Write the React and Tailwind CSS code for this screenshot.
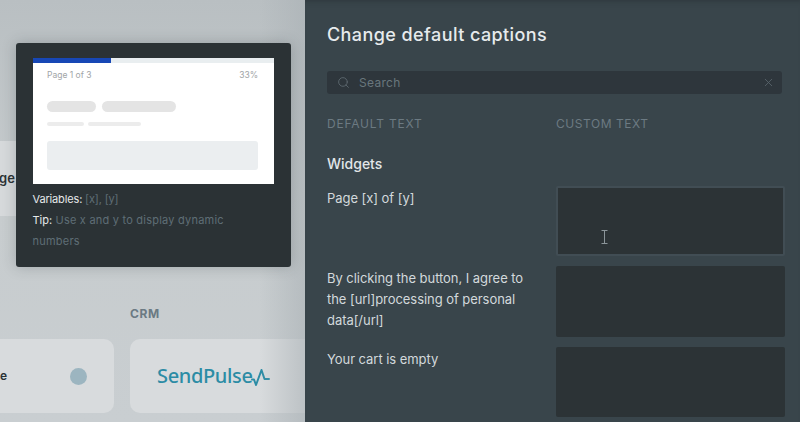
import React from "react";
import { Search, X } from "lucide-react";

function Row({ label, active, h = "h-[71px]", mb = "mb-[10px]" }) {
  return (
    <div className={`grid grid-cols-[229px_229px] gap-0 ${mb}`}>
      <div className="mt-[2px] pr-[20px] text-[13px] leading-[21px] tracking-[-0.05px] text-[#d3d9dc]">{label}</div>
      <div className={`${h} relative rounded-[2px] bg-[#2c3336] ${active ? "border-2 border-[#414d54]" : ""}`}>
        {active && (
          <svg className="absolute left-[43px] top-[42px]" width="7" height="15" viewBox="0 0 7 15" fill="none" stroke="#8b9599" strokeWidth="1">
            <path d="M0.5 0.5h6M3.5 0.5v13M0.5 13.5h6" />
          </svg>
        )}
      </div>
    </div>
  );
}

export default function App() {
  return (
    <div className="flex h-[422px] w-[800px] overflow-hidden bg-[#c8cdd0] font-['Inter',sans-serif]">
      <div className="relative w-[305px] shrink-0 overflow-hidden bg-gradient-to-b from-[#b9bfc2] via-[#c7ccce] to-[#c9ced1]">
        <div className="pt-[141px]">
          <div className="flex h-[75px] w-[60px] items-center rounded-r-[8px] bg-[#d6d9db] text-[13px] font-semibold text-[#2b3235]">
            <span className="-ml-[1px]">ge</span>
          </div>
        </div>
        <div className="mt-[90px] pl-[130px] text-[12px] font-bold leading-[16px] tracking-[0.6px] text-[#6b7a83]">CRM</div>
        <div className="mt-[17px] flex gap-[16px]">
          <div className="flex h-[74px] w-[114px] shrink-0 items-center justify-between rounded-r-[10px] bg-[#d8dbdd] pr-[27px] text-[12px] font-semibold text-[#2b3235]">
            <span>e</span>
            <span className="h-[17px] w-[17px] rounded-full bg-[#9cb5c0]" />
          </div>
          <div className="flex h-[74px] w-[200px] shrink-0 items-center rounded-l-[10px] bg-[#d8dbdd] pl-[27px]">
            <span className="w-[94px] whitespace-nowrap font-['Noto_Sans',sans-serif] text-[20px] font-medium leading-none tracking-[-0.35px] text-[#2c8ca5]">SendPulse</span>
            <svg width="19" height="17" viewBox="0 0 19 17" fill="none" stroke="#2c8ca5" strokeWidth="2" strokeLinejoin="round" strokeLinecap="round" className="mt-[2px]">
              <path d="M1 10.5h2L5 16 10.5 1 13.5 10H18" />
            </svg>
          </div>
        </div>
        <div className="absolute inset-y-0 right-0 w-[45px] bg-gradient-to-r from-transparent to-[#aab1b5]/60" />

        <div className="absolute left-[15.5px] top-[43px] h-[224px] w-[275.5px] rounded-[3px] bg-[#2b3235] px-[17px] pt-[15px] shadow-[0_0_14px_rgba(40,50,55,0.25)]">
          <div className="h-[126px] w-[241.5px] bg-white">
            <div className="h-[4.5px] bg-[#e9eef0]">
              <div className="h-full w-[78.5px] bg-[#1747b5]" />
            </div>
            <div className="flex justify-between pl-[14.5px] pr-[16px] pt-[6px] text-[8.5px] leading-[12px] text-[#a1a5a7]">
              <span>Page 1 of 3</span>
              <span>33%</span>
            </div>
            <div className="mt-[20px] flex gap-[6px] pl-[14px]">
              <div className="h-[11px] w-[49px] rounded-full bg-[#e4e4e4]" />
              <div className="h-[11px] w-[74px] rounded-full bg-[#e4e4e4]" />
            </div>
            <div className="mt-[10px] flex gap-[4px] pl-[14px]">
              <div className="h-[4px] w-[37px] rounded-full bg-[#ececec]" />
              <div className="h-[4px] w-[53px] rounded-full bg-[#ececec]" />
            </div>
            <div className="ml-[14.5px] mr-[16px] mt-[15px] h-[29px] rounded-[3px] bg-[#ebeef0]" />
          </div>
          <div className="mt-[5px] w-[230px] text-[11px] leading-[21px] text-[#5f6e75]">
            <div className="tracking-[-0.15px]"><span className="text-[#e6e9ea]">Variables:</span> [x], [y]</div>
            <div className="tracking-[0.22px]"><span className="tracking-normal text-[#e6e9ea]">Tip:</span> Use x and y to display dynamic numbers</div>
          </div>
        </div>
      </div>

      <div className="flex-1 overflow-hidden bg-[#39454b] pl-[22px] pr-[15px] shadow-[inset_0_6px_6px_-6px_rgba(30,36,40,0.5)]">
        <h1 className="pt-[25px] text-[18px] font-medium leading-[20px] tracking-[0.42px] text-[#e7ebed]">Change default captions</h1>
        <div className="mt-[26px] flex h-[23px] w-[455px] items-center rounded-[3px] bg-[#2e363c] pl-[10px] pr-[7px] text-[12px] text-[#69767d]">
          <Search size={13} strokeWidth={1.6} className="text-[#5f6b72]" />
          <span className="ml-[9px] flex-1 tracking-[0.3px]">Search</span>
          <X size={13} strokeWidth={1.6} className="text-[#59656c]" />
        </div>
        <div className="mt-[22px] grid grid-cols-[229px_229px] text-[12px] leading-[16px] tracking-[0.55px] text-[#6c7a82]">
          <span className="tracking-[0.8px]">DEFAULT TEXT</span>
          <span>CUSTOM TEXT</span>
        </div>
        <div className="mt-[23px] text-[14px] font-medium leading-[18px] text-[#e2e6e8]">Widgets</div>
        <div className="mt-[13px]">
          <Row label="Page [x] of [y]" active h="h-[70px]" mb="mb-[10px]" />
          <Row label="By clicking the button, I agree to the [url]processing of personal data[/url]" h="h-[71px]" mb="mb-[10px]" />
          <Row label="Your cart is empty" h="h-[70px]" mb="mb-0" />
        </div>
      </div>
    </div>
  );
}
